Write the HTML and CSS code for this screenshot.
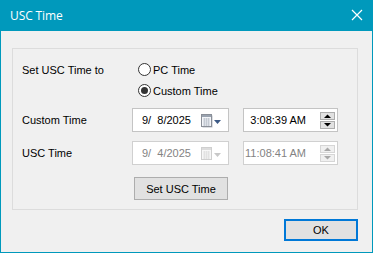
FILE: index.html
```html
<!DOCTYPE html>
<html>
<head>
<meta charset="utf-8">
<link rel="stylesheet" href="styles.css">
</head>
<body>
<div class="window">
  <div class="titlebar">
    <span class="title">USC Time</span>
    <svg class="close" width="12" height="12" viewBox="0 0 12 12"><path d="M1 1L11 11M11 1L1 11" stroke="#fff" stroke-width="1.2" fill="none"/></svg>
  </div>
  <div class="content">
    <div class="group">
      <div class="row row-radio">
        <div class="label">Set USC Time to</div>
        <div class="radio"><span class="circle"></span><span>PC Time</span></div>
      </div>
      <div class="row row-radio">
        <div class="label"></div>
        <div class="radio"><span class="circle checked"></span><span>Custom Time</span></div>
      </div>
      <div class="row row-field gap7">
        <div class="label">Custom Time</div>
        <div class="datebox">
          <span class="val">9/&nbsp;&nbsp;8/2025</span>
          <svg class="cal" width="20" height="14" viewBox="0 0 20 14">
            <rect x="1.5" y="1.5" width="10" height="12" fill="#b9bec7"/>
            <rect x="0.5" y="0.5" width="10" height="12" fill="#f4f6fa" stroke="#8a8f98"/>
            <rect x="1" y="1" width="9" height="2" fill="#9aa3b0"/>
            <path d="M2 5h7M2 7h7M2 9h7M2 11h7M3.5 4v8M5.5 4v8M7.5 4v8" stroke="#c4cad3" stroke-width="1"/>
            <path d="M13 6h7l-3.5 4z" fill="#3d5a86"/>
          </svg>
        </div>
        <div class="timebox">
          <span class="tval">3:08:39 AM</span>
          <div class="spin">
            <div class="sbtn"><svg width="7" height="4" viewBox="0 0 7 4"><path d="M0 4h7L3.5 0.5z" fill="#000"/></svg></div>
            <div class="sbtn"><svg width="7" height="4" viewBox="0 0 7 4"><path d="M0 0h7L3.5 3.5z" fill="#000"/></svg></div>
          </div>
        </div>
      </div>
      <div class="row row-field gap9">
        <div class="label">USC Time</div>
        <div class="datebox disabled">
          <span class="val">9/&nbsp;&nbsp;4/2025</span>
          <svg class="cal" width="20" height="14" viewBox="0 0 20 14">
            <rect x="0.5" y="0.5" width="10" height="12" fill="#f7f7f7" stroke="#cfcfcf"/>
            <rect x="1" y="1" width="9" height="2" fill="#dcdcdc"/>
            <path d="M2 5h7M2 7h7M2 9h7M2 11h7M3.5 4v8M5.5 4v8M7.5 4v8" stroke="#e2e2e2" stroke-width="1"/>
            <path d="M13 6h7l-3.5 4z" fill="#c8c8c8"/>
          </svg>
        </div>
        <div class="timebox disabled">
          <span class="tval">11:08:41 AM</span>
          <div class="spin">
            <div class="sbtn"><svg width="7" height="4" viewBox="0 0 7 4"><path d="M0 4h7L3.5 0.5z" fill="#a8a8a8"/></svg></div>
            <div class="sbtn"><svg width="7" height="4" viewBox="0 0 7 4"><path d="M0 0h7L3.5 3.5z" fill="#a8a8a8"/></svg></div>
          </div>
        </div>
      </div>
      <div class="row gap12">
        <button class="btn setbtn">Set USC Time</button>
      </div>
    </div>
    <div class="footer">
      <button class="btn okbtn">OK</button>
    </div>
  </div>
</div>
</body>
</html>
```
FILE: styles.css
```css
* { box-sizing: border-box; }
html, body { margin: 0; padding: 0; background: #f0f0f0; }
body { font-family: "Liberation Sans", Arial, sans-serif; font-size: 11px; color: #000; }
.window {
  width: 373px; height: 253px;
  border: 1px solid #0099bc;
  border-top: none;
  background: #f0f0f0;
  display: flex; flex-direction: column;
}
.titlebar {
  height: 31px;
  margin: 0 -1px;
  background: #0099bc;
  display: flex; align-items: center;
  padding: 0 0 1px 10px;
}
.title { font-family: "Open Sans", "Noto Sans", sans-serif; font-size: 12px; color: #fff; flex: 1; letter-spacing: -0.1px; }
.close { margin-right: 10px; }
.content { padding: 17px 14px 0 11px; display: flex; flex-direction: column; }
.group {
  border: 1px solid #dcdcdc;
  height: 162px;
  padding: 10px 0 0 9px;
  display: flex; flex-direction: column;
}
.row { display: flex; align-items: center; }
.row-radio { height: 21px; }
.row-field { height: 24px; }
.gap7 { margin-top: 7px; }
.gap9 { margin-top: 9px; }
.gap12 { margin-top: 12px; }
.label { width: 110px; flex: none; }
.radio { display: flex; align-items: center; margin-left: 6px; }
.circle {
  width: 13px; height: 13px; border-radius: 50%;
  border: 1px solid #333; background: #fff;
  margin-right: 2px; position: relative;
}
.circle.checked::after {
  content: ""; position: absolute; left: 2px; top: 2px;
  width: 7px; height: 7px; border-radius: 50%; background: #333;
}
.datebox {
  width: 97px; height: 24px;
  border: 1px solid #c4c4c4; background: #fff;
  display: flex; align-items: center;
  padding: 0 7px 0 9px;
}
.datebox .val { flex: 1; }
.cal { display: block; margin-top: 1px; }
.timebox {
  width: 95px; height: 24px; margin-left: 14px;
  border: 1px solid #c4c4c4; background: #fff;
  display: flex; align-items: center;
  padding-right: 2px;
}
.tval { flex: 1; text-align: right; padding-right: 14px; }
.spin { width: 15px; display: flex; flex-direction: column; gap: 1px; }
.sbtn {
  height: 8px; background: #e1e1e1; border: 1px solid #adadad;
  display: flex; align-items: center; justify-content: center;
}
.disabled { border-color: #d0d0d0; }
.disabled .val, .disabled .tval { color: #838383; }
.disabled .sbtn { background: #f0f0f0; border-color: #d6d6d6; }
.btn {
  font-family: "Liberation Sans", Arial, sans-serif; font-size: 11px; color: #000;
  background: #e1e1e1; border: 1px solid #adadad; padding: 0; margin: 0;
}
.setbtn { width: 94px; height: 23px; margin-left: 112px; }
.footer { display: flex; justify-content: flex-end; margin-top: 9px; }
.okbtn { width: 74px; height: 22px; border: 2px solid #0078d7; }
```
